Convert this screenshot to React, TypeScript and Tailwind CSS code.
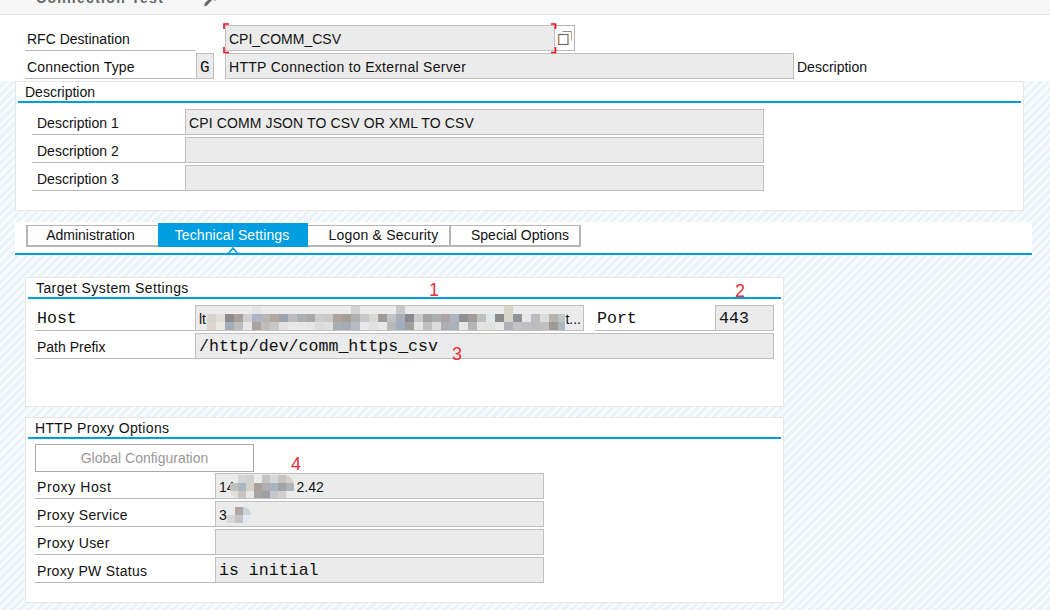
import React from "react";

const font = "font-['Liberation_Sans',Arial,sans-serif]";
const mono = "font-['Liberation_Mono','Courier_New',monospace]";

function Field({ className = "", children }: { className?: string; children?: React.ReactNode }) {
  return (
    <div className={`relative flex h-[26px] shrink-0 items-center overflow-hidden whitespace-nowrap border border-[#bfbfbf] bg-[#ebebeb] pl-[3px] pt-[3px] text-[14px] text-[#111] ${className}`}>
      {children}
    </div>
  );
}

function Label({ className = "", children }: { className?: string; children?: React.ReactNode }) {
  return (
    <div className={`flex h-[26px] shrink-0 items-center border-b border-[#b8b8b8] pt-[4px] text-[14px] text-[#111] ${className}`}>
      {children}
    </div>
  );
}

function Title({ children, className = "" }: { children: React.ReactNode; className?: string }) {
  return (
    <div className={`mx-[2px] flex h-[21px] items-center border-b-2 border-[#009de0] text-[14px] leading-[18px] text-[#111] ${className}`}>
      {children}
    </div>
  );
}

function Mosaic({ rows, w, h, className = "" }: { rows: string[][]; w: number; h: number; className?: string }) {
  return (
    <div className={`absolute flex flex-col overflow-hidden ${className}`}>
      {rows.map((r, i) => (
        <div key={i} className="flex">
          {r.map((c, j) => (
            <div key={j} className="shrink-0" style={{ width: w, height: h, backgroundColor: c === "-" ? "transparent" : "#" + c }} />
          ))}
        </div>
      ))}
    </div>
  );
}

const hostRows = [
  "- - - - - e4e4e4 - - - - - - - - - - d2d2d2 - - - - c8c8c8 - - - - - - - - - - - d9d4c8 - - - - - - - - - - - -".split(" "),
  "d6d3ce e2ddd6 8f8a8c a89f9a cfcfd2 b0b3c6 b6b6b6 b2a8a2 9fa3ae bcbcbc adb0b2 a8a8a8 cdcdcd c9c9c9 b0a39c a59f99 b0afae c7c8ca dbd9d3 a09a9a bfc3c5 a9adbc 8d8a8f c8c8c8 a5a5a5 abb0ae aea2a5 aeb5bf 8f8f92 a09b98 c0c0c0 dfe8e8 8d8d90 d8d5cb 8e9397 e8e8e8 bbbcc0 dcdcdc b9b3ae bac8cc a8a4a2 a5a3a8".split(" "),
  "ded6cd eae6e2 a5aeb8 bdbdbd e8e8e8 aba49e c2bcb8 c8c8c8 e2e2e2 e8e8e8 e8e8e8 e6e6e6 dcdcdc e2e0dc a9adb6 a8abb3 b8bcc2 e8e8e8 e0e0e0 e8e8e8 b8b8b8 9fafbd a0a0a0 e4e4e4 c0c0c0 dcdcdc abaeb2 a9b2b8 e6e6e6 b5b5b8 e4e4e4 dfe3dc e8e8e8 b0b0b8 c5c2c6 c0c0c4 bcbcbc c0c0c0 9e9a94 abb8c0 b5bcc0 c8c8c8".split(" "),
];

const proxyRows = [
  "- d4d4d4 d0d0d0 - c4c4c4 d8d8d8 c8c4c0 d6cfc8".split(" "),
  "c0c0c0 a9b8c4 d4d0ca a8a09a b0aeb0 a8b4bc a4a4a8 aeb4b8".split(" "),
  "e0ddd8 c8c4be e8e8e8 a8a4a2 9aa0a6 c4c8cc d0d0d0 -".split(" "),
];

const svcRows = [
  "- b0a8a4 c8d4e0".split(" "),
  "d6d6d6 c4c4c4 e0e8f0".split(" "),
];

export default function App() {
  return (
    <div className={`relative h-[610px] w-[1050px] overflow-hidden bg-[repeating-linear-gradient(135deg,#e9f3f8_0,#e9f3f8_3px,#f7fbfd_3px,#f7fbfd_6px)] ${font}`}>
      {/* top toolbar, cut off by the window */}
      <div className="flex h-[15px] items-start overflow-hidden border-b border-[#e3e3e3] bg-[#f7f7f7]">
        <span className="ml-[36px] mt-[-10px] whitespace-nowrap text-[14px] font-bold leading-[16px] tracking-[1.3px] text-[#666]">Connection Test</span>
        <svg className="ml-[39px] mt-[-1px]" width="16" height="8" viewBox="0 0 16 8">
          <path d="M1 7.5 L2 4 L7 -1 L11 -1 L4 6.5 Z" fill="#666" />
          <path d="M8 -1 L15 -1 L12 2 Z" fill="#8a8a8a" />
        </svg>
      </div>

      {/* header fields */}
      <div className="h-[66px] bg-white pl-[25px] pt-[10px]">
        <div className="flex">
          <Label className="w-[170px] pl-[2px]">RFC Destination</Label>
          <Field className="ml-[30px] w-[330px]">CPI_COMM_CSV</Field>
          <div className="flex h-[26px] w-[20px] items-center justify-center border border-l-0 border-[#b5b5b5] bg-white">
            <svg width="16" height="16" viewBox="0 0 16 16" fill="none">
              <path d="M5.5 1.5 H14.5" stroke="#8a8aa0" strokeWidth="1" />
              <path d="M14.5 1.5 V10.5" stroke="#c9a27a" strokeWidth="1" />
              <rect x="1.5" y="4.5" width="9.5" height="10" stroke="#6d6d6d" strokeWidth="1.2" fill="#fff" />
              <path d="M2 5 V14" stroke="#e0a050" strokeWidth="1" />
            </svg>
          </div>
        </div>
        <div className="mt-[2px] flex items-center">
          <Label className="w-[170px] pl-[2px] tracking-[0.2px]">Connection Type</Label>
          <Field className={`ml-[1px] w-[18px] ${mono} !text-[16px]`}>G</Field>
          <Field className="ml-[11px] w-[569px] tracking-[0.3px]">HTTP Connection to External Server</Field>
          <span className="ml-[3px] pt-[3px] text-[14px] text-[#111]">Description</span>
        </div>
      </div>

      {/* description group */}
      <div className="ml-[15px] h-[130px] w-[1009px] border border-[#e6e6e6] bg-white">
        <Title className="pl-[7px]">Description</Title>
        <div className="ml-[16px] mt-[6px] flex flex-col gap-[2px]">
          {["Description 1", "Description 2", "Description 3"].map((d, i) => (
            <div key={d} className="flex">
              <Label className="w-[153px] pl-[5px]">{d}</Label>
              <Field className="w-[579px] tracking-[0.12px]">{i === 0 ? "CPI COMM JSON TO CSV OR XML TO CSV" : ""}</Field>
            </div>
          ))}
        </div>
      </div>

      {/* tab strip */}
      <div className="relative ml-[15px] mt-[11px] h-[33px] w-[1017px] border-b-2 border-[#009de0] bg-white pl-[11px] pt-px">
        <div className="flex items-start text-[14px] text-[#111]">
          <div className="mt-[2px] flex h-[22px] w-[132px] items-center justify-center border-2 border-r-0 border-t border-[#b5b5b5] pr-[5px]">Administration</div>
          <div className="flex h-[24px] w-[150px] items-center justify-center bg-[#009de0] pt-px pr-[2px] tracking-[0.1px] text-white">Technical Settings</div>
          <div className="mt-[2px] flex h-[22px] w-[143px] items-center justify-center border-b-2 border-r-2 border-t border-[#b5b5b5] pl-[10px] tracking-[0.2px]">Logon &amp; Security</div>
          <div className="mt-[2px] flex h-[22px] w-[130px] items-center justify-center border-b-2 border-r-2 border-t border-[#b5b5b5] pl-[10px]">Special Options</div>
        </div>
        <svg className="absolute left-[211px] top-[24px]" width="14" height="8" viewBox="0 0 14 8" fill="none">
          <path d="M0 7.5 H2.5 L7 2 L11.5 7.5 H14" stroke="#009de0" strokeWidth="1.6" />
        </svg>
      </div>

      {/* target system */}
      <div className="ml-[25px] mt-[22px] h-[130px] w-[759px] border border-[#e6e6e6] bg-white">
        <Title className="pl-[8px] tracking-[0.4px]">Target System Settings</Title>
        <div className="ml-[9px] mt-[6px] flex">
          <Label className={`w-[160px] pl-[2px] ${mono} !text-[16.6px]`}>Host</Label>
          <Field className="w-[389px]">
            <span>lt</span>
            <span className="ml-auto pr-[2px]">t...</span>
            <Mosaic rows={hostRows} w={9} h={8} className="left-[11px] top-0 h-[24px] w-[358px]" />
          </Field>
          <Label className={`ml-[11px] w-[120px] pl-[2px] ${mono} !text-[16.6px]`}>Port</Label>
          <Field className={`w-[59px] ${mono} !text-[16.6px]`}>443</Field>
        </div>
        <div className="ml-[9px] mt-[2px] flex">
          <Label className="w-[160px] pl-[2px]">Path Prefix</Label>
          <Field className={`w-[579px] ${mono} !text-[16.6px]`}>/http/dev/comm_https_csv</Field>
        </div>
      </div>

      {/* proxy */}
      <div className="ml-[25px] mt-[10px] h-[186px] w-[759px] border border-[#e6e6e6] bg-white">
        <Title className="pl-[7px] tracking-[0.35px]">HTTP Proxy Options</Title>
        <div className="ml-[9px] mt-[5px] flex h-[28px] w-[219px] items-center justify-center border border-[#a8a8a8] bg-white pt-px text-[14px] text-[#999]">Global Configuration</div>
        <div className="ml-[9px] mt-px flex flex-col gap-[2px]">
          <div className="flex">
            <Label className="w-[180px] pl-[2px] tracking-[0.6px]">Proxy Host</Label>
            <Field className="w-[329px]">
              <span>14</span>
              <span className="ml-[62px]">2.42</span>
              <Mosaic rows={proxyRows} w={8} h={8} className="left-[14px] top-px h-[24px] w-[64px] rounded-[10px]" />
            </Field>
          </div>
          <div className="flex">
            <Label className="w-[180px] pl-[2px] tracking-[0.35px]">Proxy Service</Label>
            <Field className="w-[329px]">
              <span>3</span>
              <Mosaic rows={svcRows} w={8} h={8} className="left-[11px] top-[5px] w-[24px] rounded-r-[8px]" />
            </Field>
          </div>
          <div className="flex">
            <Label className="w-[180px] pl-[2px] tracking-[0.35px]">Proxy User</Label>
            <Field className="w-[329px]" />
          </div>
          <div className="flex">
            <Label className="w-[180px] pl-[2px] tracking-[0.3px]">Proxy PW Status</Label>
            <Field className={`w-[329px] ${mono} !text-[16.6px]`}>is initial</Field>
          </div>
        </div>
      </div>

      {/* red focus corners on the destination field */}
      <svg className="absolute left-[223px] top-[23px]" width="334" height="31" viewBox="0 0 334 31" fill="none" stroke="#e60f1c" strokeWidth="1.6">
        <path d="M6 1 H1 V6" />
        <path d="M328 1 H332.5 V6" />
        <path d="M1 24 V29.5 H6" />
        <path d="M332.5 24 V29.5 H328" />
      </svg>

      {/* hand-written annotations */}
      <span className="absolute left-[429px] top-[280px] text-[18px] leading-[20px] text-[#ee2b36]">1</span>
      <span className="absolute left-[735px] top-[281px] text-[18px] leading-[20px] text-[#ee2b36]">2</span>
      <span className="absolute left-[452px] top-[344px] text-[18px] leading-[20px] text-[#ee2b36]">3</span>
      <span className="absolute left-[291px] top-[454px] text-[18px] leading-[20px] text-[#ee2b36]">4</span>
    </div>
  );
}
